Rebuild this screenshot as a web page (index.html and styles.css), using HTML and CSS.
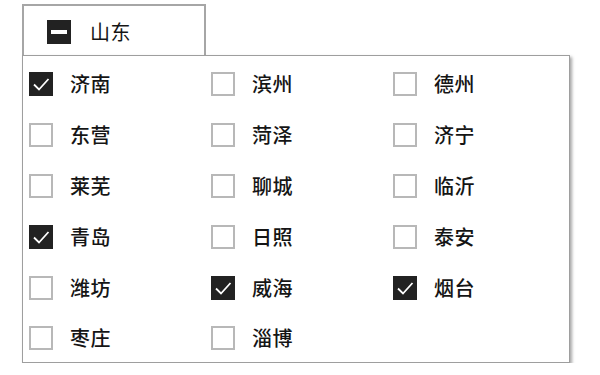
FILE: index.html
```html
<!DOCTYPE html>
<html lang="zh">
<head>
<meta charset="utf-8">
<link rel="stylesheet" href="styles.css">
</head>
<body>
<div class="wrap">
  <div class="tab">
    <span class="box indeterminate"><span class="bar"></span></span>
    <span class="label tab-label">山东</span>
  </div>
  <div class="panel">
    <div class="item"><span class="box checked"><svg viewBox="0 0 24 24"><path d="M5 12.5 L10 17.5 L19.5 7"/></svg></span><span class="label">济南</span></div>
    <div class="item"><span class="box"></span><span class="label">滨州</span></div>
    <div class="item"><span class="box"></span><span class="label">德州</span></div>
    <div class="item"><span class="box"></span><span class="label">东营</span></div>
    <div class="item"><span class="box"></span><span class="label">菏泽</span></div>
    <div class="item"><span class="box"></span><span class="label">济宁</span></div>
    <div class="item"><span class="box"></span><span class="label">莱芜</span></div>
    <div class="item"><span class="box"></span><span class="label">聊城</span></div>
    <div class="item"><span class="box"></span><span class="label">临沂</span></div>
    <div class="item"><span class="box checked"><svg viewBox="0 0 24 24"><path d="M5 12.5 L10 17.5 L19.5 7"/></svg></span><span class="label">青岛</span></div>
    <div class="item"><span class="box"></span><span class="label">日照</span></div>
    <div class="item"><span class="box"></span><span class="label">泰安</span></div>
    <div class="item"><span class="box"></span><span class="label">潍坊</span></div>
    <div class="item"><span class="box checked"><svg viewBox="0 0 24 24"><path d="M5 12.5 L10 17.5 L19.5 7"/></svg></span><span class="label">威海</span></div>
    <div class="item"><span class="box checked"><svg viewBox="0 0 24 24"><path d="M5 12.5 L10 17.5 L19.5 7"/></svg></span><span class="label">烟台</span></div>
    <div class="item"><span class="box"></span><span class="label">枣庄</span></div>
    <div class="item"><span class="box"></span><span class="label">淄博</span></div>
  </div>
</div>
</body>
</html>
```

FILE: styles.css
```css
html, body {
  margin: 0;
  padding: 0;
  background: #ffffff;
}
body {
  font-family: "Noto Sans CJK SC", "Noto Sans", sans-serif;
  color: #151515;
}
.wrap {
  padding: 4px 0 0 22px;
}
.tab {
  box-sizing: border-box;
  width: 184px;
  height: 51px;
  border: 2px solid #a6a6a6;
  border-bottom: none;
  display: flex;
  align-items: center;
  padding: 2px 0 0 23px;
  background: #fff;
}
.tab .box {
  margin-right: 19px;
}
.label {
  font-size: 20px;
  line-height: 24px;
  font-weight: 500;
  letter-spacing: 0.5px;
}
.tab-label {
  font-weight: 400;
}
.box {
  box-sizing: border-box;
  width: 24px;
  height: 24px;
  border: 2px solid #b8b8b8;
  background: #fff;
  display: flex;
  align-items: center;
  justify-content: center;
  flex-shrink: 0;
}
.box.checked,
.box.indeterminate {
  background: #222222;
  border-color: #222222;
}
.box svg {
  width: 24px;
  height: 24px;
  flex-shrink: 0;
}
.box svg path {
  fill: none;
  stroke: #ffffff;
  stroke-width: 1.8;
}
.bar {
  width: 16px;
  height: 4px;
  background: #ffffff;
}
.panel {
  box-sizing: border-box;
  width: 548px;
  height: 308px;
  border: 1px solid #9e9e9e;
  box-shadow: 2px 2px 3px rgba(0, 0, 0, 0.35);
  padding: 3px 0 0 6px;
  display: grid;
  grid-template-columns: 182px 182px 182px;
  grid-auto-rows: 50.8px;
  background: #fff;
}
.item {
  display: flex;
  align-items: center;
}
.item .box {
  margin-right: 17px;
}
```
